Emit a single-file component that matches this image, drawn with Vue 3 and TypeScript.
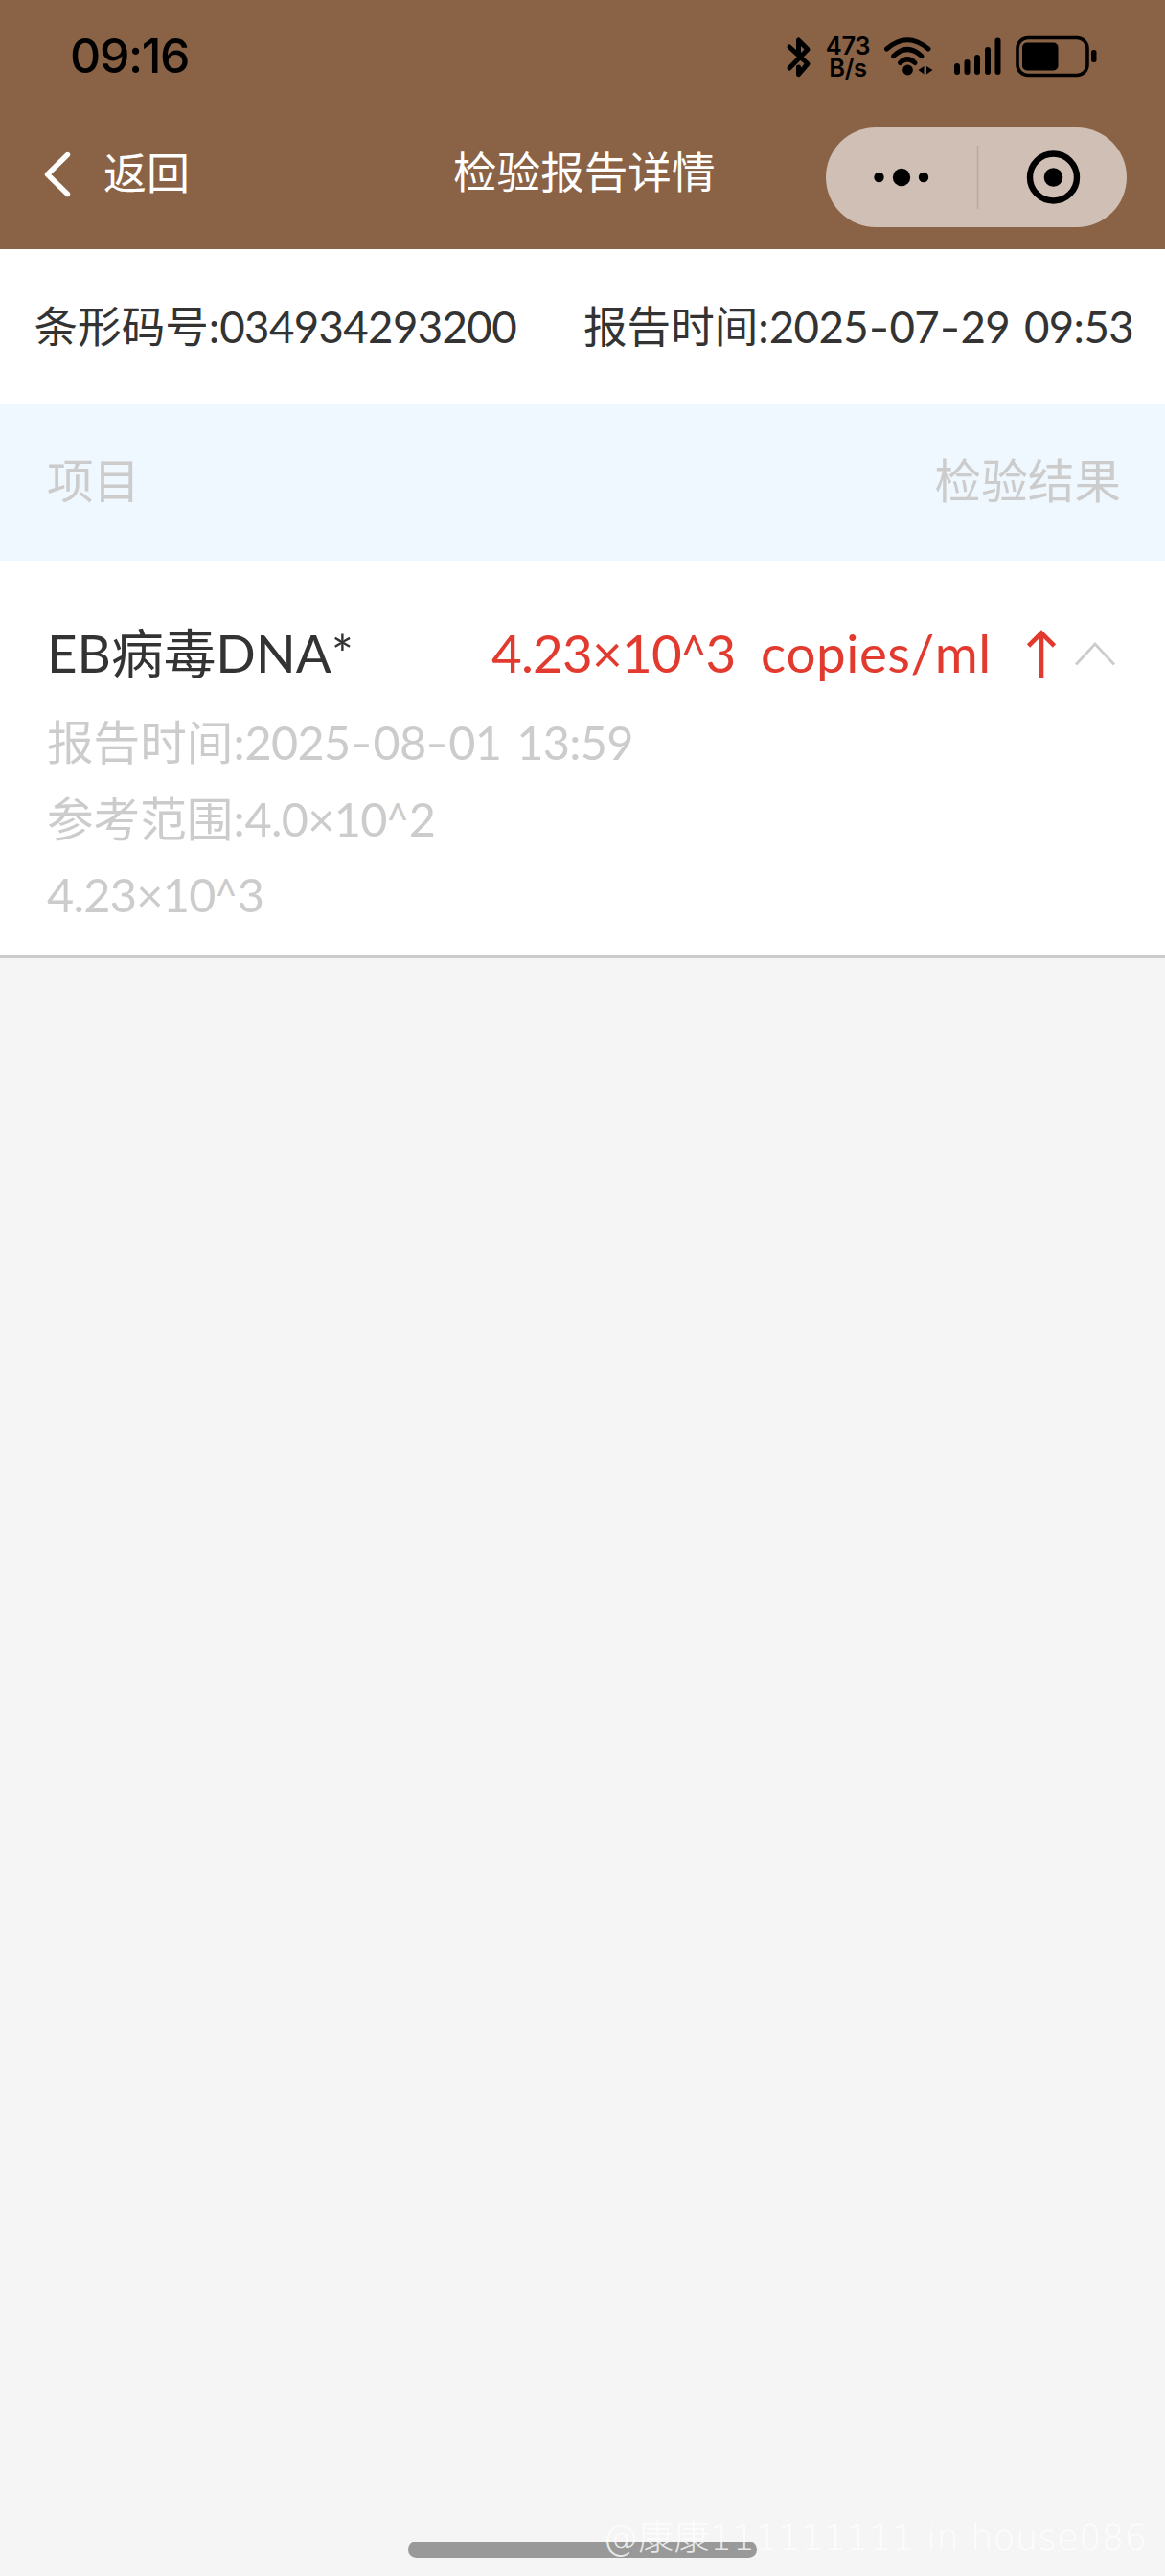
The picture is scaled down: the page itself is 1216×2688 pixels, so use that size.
<script setup lang="ts">
interface ReportItem {
  name: string
  value: string
  unit: string
  details: string[]
}

interface Run {
  kind: 'text' | 'dash' | 'caret'
  text: string
}

const barcode = '034934293200'
const reportTime = '2025-07-29 09:53'
const items: ReportItem[] = [
  {
    name: 'EB病毒DNA*',
    value: '4.23×10^3',
    unit: 'copies/ml',
    details: ['报告时间:2025-08-01 13:59', '参考范围:4.0×10^2', '4.23×10^3'],
  },
]

// Splits figures so that dashes and carets can carry their own widths
function runs(source: string): Run[] {
  return source
    .split(/([-^])/)
    .filter((text) => text !== '')
    .map((text) => ({
      kind: text === '-' ? 'dash' : text === '^' ? 'caret' : 'text',
      text,
    }))
}

function label(line: string): string {
  return line.slice(0, line.indexOf(':') + 1)
}

function figures(line: string): string {
  return line.slice(line.indexOf(':', 0) === 4 ? 5 : 0)
}
</script>

<template>
  <div class="screen">
    <header class="header">
      <div class="status">
        <span class="clock">09:16</span>
        <div class="indicators">
          <svg class="bluetooth" width="28" height="46" viewBox="0 0 28 46">
            <path d="M4 12L23 29.500L13.500 40.500V33M4 34L23 14.500L13.500 5V19" fill="none" stroke="#000" stroke-width="5" stroke-linecap="round" stroke-linejoin="round" />
          </svg>
          <div class="speed"><span>473</span><span>B/s</span></div>
          <svg class="wifi" width="54" height="44" viewBox="0 0 54 44">
            <g fill="none" stroke="#000" stroke-width="5" stroke-linecap="round">
              <path d="M4.500 14Q26 -4.500 48 14" />
              <path d="M11.500 21.500Q26 7.500 41 21.500" />
              <path d="M18.500 28.500Q26 21 34 28.500" />
            </g>
            <circle cx="26.500" cy="36" r="5.400" />
            <path d="M43.500 32V40.500L37.500 36ZM46 32V40.500L52.500 36Z" />
          </svg>
          <svg class="signal" width="50" height="42" viewBox="0 0 50 42">
            <rect x="0" y="27" width="6" height="12" rx="3" />
            <rect x="10.500" y="23" width="6" height="16" rx="3" />
            <rect x="21" y="18" width="6" height="21" rx="3" />
            <rect x="32" y="10" width="6" height="29" rx="3" />
            <rect x="42.500" y="0.500" width="6" height="38.500" rx="3" />
          </svg>
          <svg class="battery" width="86" height="44" viewBox="0 0 86 44">
            <rect x="2" y="2.500" width="73" height="39" rx="11" fill="none" stroke="#000" stroke-width="3.600" />
            <rect x="7" y="7.500" width="37.500" height="29" rx="5" />
            <rect x="79" y="15" width="5.500" height="13" rx="2.500" />
          </svg>
        </div>
      </div>
      <nav class="nav">
        <div class="back">
          <svg width="32" height="52" viewBox="0 0 32 52">
            <path d="M26.500 5.500L5.500 26L26.500 46.500" fill="none" stroke="#fff" stroke-width="5.400" stroke-linecap="round" stroke-linejoin="round" />
          </svg>
          <span>返回</span>
        </div>
        <h1 class="title">检验报告详情</h1>
        <div class="capsule">
          <svg width="314" height="104" viewBox="0 0 314 104">
            <circle cx="55.500" cy="52" r="5.200" />
            <circle cx="79" cy="52" r="9.200" />
            <circle cx="102" cy="52" r="5.200" />
            <path d="M158.500 19V85" stroke="#bba99f" stroke-width="1.500" />
            <circle cx="237.500" cy="52" r="24.500" fill="none" stroke="#000" stroke-width="6.400" />
            <circle cx="237.500" cy="52" r="9.800" />
          </svg>
        </div>
      </nav>
    </header>

    <section class="meta">
      <span>条形码号:<span class="num">{{ barcode }}</span></span>
      <span>报告时间:<span class="num"><span v-for="(r, i) in runs(reportTime)" :key="i" :class="r.kind">{{ r.text }}</span></span></span>
    </section>

    <div class="columns">
      <span>项目</span>
      <span>检验结果</span>
    </div>

    <article v-for="item in items" :key="item.name" class="item">
      <div class="summary">
        <span class="name">{{ item.name }}</span>
        <span class="value num"><span v-for="(r, i) in runs(item.value)" :key="i" :class="r.kind">{{ r.text }}</span></span>
        <span class="unit">{{ item.unit }}</span>
        <svg class="up" width="32" height="52" viewBox="0 0 32 52">
          <path d="M16 50V4M2.500 17L16 3.500L29.500 17" fill="none" stroke="#e23a2e" stroke-width="4.600" />
        </svg>
        <svg class="fold" width="44" height="28" viewBox="0 0 44 28">
          <path d="M2 24.500L22 3L42 24.500" fill="none" stroke="#ccc" stroke-width="2.800" />
        </svg>
      </div>
      <p v-for="line in item.details" :key="line" class="detail">{{ label(line) }}<span class="num"><span v-for="(r, i) in runs(figures(line))" :key="i" :class="r.kind">{{ r.text }}</span></span></p>
    </article>

    <div class="home-bar"></div>
    <div class="watermark">@康康111111111 in house086</div>
  </div>
</template>

<style>
body {
  margin: 0;
  background: #f5f5f5;
}
</style>

<style scoped>
.screen {
  position: relative;
  width: 1216px;
  height: 2688px;
  overflow: hidden;
  background: #f5f5f5;
  color: #333;
  font-family: Lato, 'Noto Sans CJK SC', sans-serif;
  font-kerning: none;
  white-space: nowrap;
}
svg {
  display: block;
  flex: none;
}
.num {
  letter-spacing: -0.014em;
  word-spacing: 0.085em;
}
.dash,
.caret {
  display: inline-block;
  letter-spacing: 0;
}
.dash {
  margin: 0 0.06em;
  transform: scaleX(1.3);
}
.caret {
  margin: 0 -0.055em;
  transform: scaleX(0.85);
}
.header {
  height: 260px;
  background: #8a6245;
}
.status {
  display: flex;
  justify-content: space-between;
  height: 118px;
  padding: 0 70px 0 73px;
  color: #000;
}
.clock {
  height: 116px;
  font: 500 50px/116px Inter, sans-serif;
  letter-spacing: -1.4px;
}
.indicators {
  display: flex;
  align-items: flex-start;
  padding-top: 37px;
}
.speed {
  display: flex;
  flex-direction: column;
  align-items: center;
  width: 48px;
  margin: -1px 0 0 13px;
  font: 600 25.5px/23px Inter, sans-serif;
  letter-spacing: -0.4px;
}
.wifi {
  margin-left: 12px;
}
.signal {
  margin: 2px 0 0 21px;
}
.battery {
  margin-left: 14px;
}
.nav {
  display: grid;
  grid-template-columns: 473px 1fr 354px;
  height: 134px;
  margin-top: 14px;
}
.back {
  display: flex;
  height: 100px;
  align-items: center;
  padding-left: 44px;
  color: #fff;
  font-size: 45px;
}
.back span {
  margin-left: 32px;
  line-height: 98px;
  height: 100px;
}
.title {
  margin: 0;
  color: #fff;
  font-size: 45.6px;
  font-weight: 400;
  line-height: 96px;
}
.capsule {
  width: 314px;
  height: 104px;
  margin-top: 1px;
  border-radius: 52px;
  background: #d0bfb5;
}
.meta {
  display: flex;
  justify-content: space-between;
  height: 162px;
  padding: 0 33px 0 35.500px;
  background: #fff;
  font-size: 45.6px;
  line-height: 161px;
}
.columns {
  display: flex;
  justify-content: space-between;
  height: 163px;
  padding: 0 46px 0 49px;
  background: #f0f8ff;
  color: #ccc;
  font-size: 48.6px;
  line-height: 159px;
}
.item {
  height: 412px;
  border-bottom: 3px solid #ccc;
  background: #fff;
}
.summary {
  display: flex;
  align-items: center;
  height: 150px;
  padding: 46px 0 0 49px;
  box-sizing: border-box;
  font-size: 54.7px;
}
.name,
.value,
.unit {
  height: 104px;
  line-height: 101px;
}
.name {
  width: 464px;
}
.value,
.unit {
  color: #e23a2e;
}
.value {
  width: 281px;
}
.unit {
  width: 277px;
  letter-spacing: 0.5px;
}
.fold {
  margin-left: 18px;
}
.detail {
  height: 79.500px;
  margin: 0;
  padding-left: 49px;
  color: #ccc;
  font-size: 48.6px;
  line-height: 79px;
}
.home-bar {
  position: absolute;
  left: 426px;
  top: 2652px;
  width: 364px;
  height: 17px;
  border-radius: 9px;
  background: #999;
}
.watermark {
  position: absolute;
  left: 629px;
  top: 2624px;
  color: rgba(255, 255, 255, 0.8);
  font: 200 37px/50px 'DejaVu Sans', 'Noto Sans CJK SC', sans-serif;
  letter-spacing: 0.25px;
}
</style>
